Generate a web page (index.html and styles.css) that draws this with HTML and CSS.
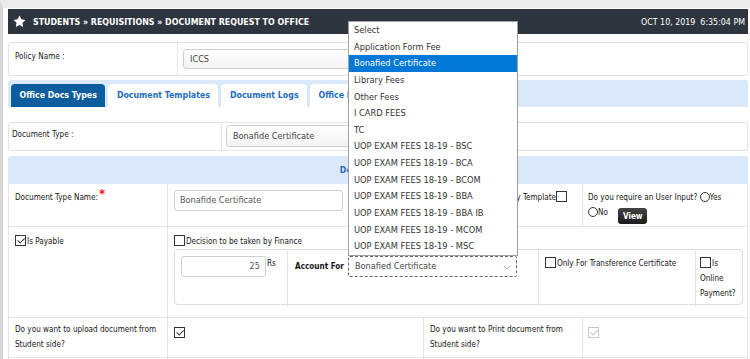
FILE: index.html
```html
<!DOCTYPE html>
<html lang="en">
<head>
    <meta charset="UTF-8">
    <title>Document Request To Office</title>
    <link rel="stylesheet" href="styles.css">
</head>
<body>
    <div class="page">
        <header class="topbar">
            <div class="crumb">
                <svg class="star" viewBox="0 0 24 24"><path fill="white" d="M12 1l3.4 7 7.6 1.1-5.5 5.3 1.3 7.6L12 18.4 5.2 22l1.3-7.6L1 9.1l7.6-1.1z"/></svg>
                <span>STUDENTS &raquo; REQUISITIONS &raquo; DOCUMENT REQUEST TO OFFICE</span>
            </div>
            <div class="clock">OCT 10, 2019&nbsp; 6:35:04 PM</div>
        </header>

        <div class="panel policy">
            <div class="panel-label">Policy Name :</div>
            <div class="panel-field"><div class="select policy-select">ICCS</div></div>
        </div>

        <ul class="tabs">
            <li class="tab active">Office Docs Types</li>
            <li class="tab">Document Templates</li>
            <li class="tab">Document Logs</li>
            <li class="tab">Office Docs Request</li>
        </ul>

        <div class="panel doctype">
            <div class="panel-label">Document Type :</div>
            <div class="panel-field"><div class="select doctype-select">Bonafide Certificate</div></div>
        </div>

        <div class="section-title">Document Type</div>

        <div class="form-grid">
            <!-- row 1 -->
            <div class="cell label">Document Type Name:<span class="req">*</span></div>
            <div class="cell field"><div class="input name-input">Bonafide Certificate</div></div>
            <div class="cell field copy">Do you want Copy Template<span class="cb"></span></div>
            <div class="cell field lines-4">
                Do you require an User Input? <span class="rd"></span>Yes<br>
                <span class="rd"></span>No <span class="view-btn">View</span>
            </div>

            <!-- row 2 -->
            <div class="cell label pay"><span class="cb checked"></span>Is Payable</div>
            <div class="cell field span3">
                <div class="finance"><span class="cb"></span>Decision to be taken by Finance</div>
                <div class="fee-box">
                    <div class="fee-cell amount">
                        <div class="input amount-input">25</div><span class="rs">Rs</span>
                    </div>
                    <div class="fee-cell account">
                        <b>Account For</b>
                        <div class="select focus">Bonafied Certificate<svg class="chev" viewBox="0 0 10 6"><path d="M1 1l4 4 4-4" stroke="#999" fill="none"/></svg></div>
                    </div>
                    <div class="fee-cell tc"><span class="cb"></span>Only For Transference Certificate</div>
                    <div class="fee-cell online"><span class="cb"></span>Is Online Payment?</div>
                </div>
            </div>

            <!-- row 3 -->
            <div class="cell label lines">Do you want to upload document from Student side?</div>
            <div class="cell field box-only"><span class="cb checked"></span></div>
            <div class="cell field lines">Do you want to Print document from Student side?</div>
            <div class="cell field box-only col4"><span class="cb checked disabled"></span></div>

            <!-- row 4 -->
            <div class="cell label"></div>
            <div class="cell field"></div>
            <div class="cell field"></div>
            <div class="cell field"></div>
        </div>
    </div>

    <ul class="dropdown">
        <li>Select</li>
        <li>Application Form Fee</li>
        <li class="hl">Bonafied Certificate</li>
        <li>Library Fees</li>
        <li>Other Fees</li>
        <li>I CARD FEES</li>
        <li>TC</li>
        <li>UOP EXAM FEES 18-19 - BSC</li>
        <li>UOP EXAM FEES 18-19 - BCA</li>
        <li>UOP EXAM FEES 18-19 - BCOM</li>
        <li>UOP EXAM FEES 18-19 - BBA</li>
        <li>UOP EXAM FEES 18-19 - BBA IB</li>
        <li>UOP EXAM FEES 18-19 - MCOM</li>
        <li>UOP EXAM FEES 18-19 - MSC</li>
    </ul>
</body>
</html>
```

FILE: styles.css
```css
* {
    margin: 0;
    padding: 0;
    box-sizing: border-box;
}

body {
    font-family: "DejaVu Sans Condensed", "DejaVu Sans", sans-serif;
    font-stretch: condensed;
    font-size: 8.1px;
    color: #161616;
    background-color: #fff;
    border-top: 8px solid #ebebeb;
    border-left: 3px solid #d8d8d8;
    min-height: 100vh;
    overflow: hidden;
}

.page {
    padding: 1px 2px 0 5px;
}

/* top bar */
.topbar {
    height: 25px;
    background-color: #2f353f;
    color: white;
    display: flex;
    justify-content: space-between;
    align-items: center;
    padding: 0 3px 0 5px;
}

.crumb {
    display: flex;
    align-items: center;
    font-weight: bold;
    font-size: 8.8px;
}

.star {
    width: 13px;
    height: 13px;
    margin-right: 7px;
}

.clock {
    font-size: 8.8px;
}

/* panels */
.panel {
    display: flex;
    border: 1px solid #e3e3e3;
    border-radius: 3px;
    background-color: white;
}

.policy {
    margin-top: 8px;
    height: 34px;
}

.policy .panel-label {
    width: 169px;
    padding: 8px 6px;
}

.policy .panel-field {
    padding: 6px 5px;
}

.panel-label {
    border-right: 1px solid #e6e6e6;
}

.select {
    height: 20px;
    border: 1px solid #cfcfcf;
    border-radius: 3px;
    background: linear-gradient(#ffffff, #f3f3f3);
    font-size: 9.1px;
    color: #444;
    padding: 0 0 0 6px;
    line-height: 18px;
    position: relative;
}

.policy-select {
    width: 300px;
}

.doctype {
    margin-top: 15px;
    height: 29px;
}

.doctype .panel-label {
    width: 213px;
    padding: 6px 3px;
}

.doctype .panel-field {
    padding: 2px 4px;
}

.doctype-select {
    width: 250px;
    height: 22px;
    line-height: 20px;
}

/* tabs */
.tabs {
    list-style: none;
    margin-top: 4px;
    height: 27px;
    background-color: #dbe8fa;
    border-radius: 3px 3px 0 0;
    padding: 4px 3px 0 3px;
    display: flex;
    align-items: flex-end;
    gap: 3px;
}

.tab {
    height: 23px;
    line-height: 23px;
    padding: 0 8.5px;
    background-color: white;
    border-radius: 4px 4px 0 0;
    font-weight: bold;
    font-size: 8.75px;
    color: #1d6cbd;
}

.tab.active {
    background-color: #0c5d9d;
    color: white;
}

.section-title {
    margin-top: 5px;
    height: 28px;
    line-height: 28px;
    background-color: #dbe8fa;
    border-radius: 3px 3px 0 0;
    text-align: center;
    font-weight: bold;
    font-size: 8.75px;
    color: #1d6cbd;
    padding-right: 8px;
}

/* form grid */
.form-grid {
    display: grid;
    grid-template-columns: 159px 256px 159px 165px;
    grid-template-rows: 43px 91px 40px 40px;
    border-left: 1px solid #e5e5e5;
}

.cell {
    border-right: 1px solid #e5e5e5;
    border-bottom: 1px solid #e5e5e5;
    line-height: 15px;
    padding: 6px 5px;
}

.cell.label {
    padding-left: 6px;
}

.cell.field {
    padding-left: 6px;
}

.cell.field.copy,
.cell.field.lines-4,
.cell.field.col4 {
    padding-left: 5px;
}

.req {
    color: #e41010;
    font-weight: bold;
    font-size: 13px;
    line-height: 0;
    position: relative;
    top: -2px;
    margin-left: 1px;
}

.input {
    border: 1px solid #cfcfcf;
    border-radius: 3px;
    background-color: white;
    font-size: 9.1px;
    color: #555;
    padding: 0 5px;
}

.name-input {
    width: 169px;
    height: 21px;
    line-height: 19px;
}

.copy {
    text-align: right;
    padding-right: 14px;
}

.cb {
    display: inline-block;
    width: 11px;
    height: 11px;
    border: 1px solid #333;
    background-color: white;
    vertical-align: -2px;
    margin-right: 1px;
    position: relative;
}

.cb.checked::after {
    content: "";
    position: absolute;
    left: 1px;
    top: 1px;
    width: 6px;
    height: 3px;
    border-left: 1px solid #333;
    border-bottom: 1px solid #333;
    transform: rotate(-45deg) translate(0, 1px);
}

.cb.disabled {
    border-color: #c8c8c8;
}

.cb.disabled::after {
    border-color: #c0c0c0;
}

.rd {
    display: inline-block;
    width: 10px;
    height: 10px;
    border: 1px solid #333;
    border-radius: 50%;
    vertical-align: -2px;
}

.view-btn {
    display: inline-block;
    margin-left: 8px;
    width: 29px;
    height: 16px;
    line-height: 16px;
    text-align: center;
    border-radius: 3px;
    background: linear-gradient(#444, #1c1c1c);
    color: white;
    font-weight: bold;
    vertical-align: -4px;
}

.pay {
    padding-top: 7px;
}

.span3 {
    grid-column: span 3;
    padding-top: 7px;
    padding-right: 4px;
}

.fee-box {
    display: grid;
    grid-template-columns: 113px 251px 157px 47px;
    height: 56px;
    border: 1px solid #dedede;
    border-radius: 4px;
}

.fee-cell {
    border-right: 1px solid #e3e3e3;
}

.fee-cell:last-child {
    border-right: none;
}

.amount {
    display: flex;
    align-items: flex-start;
    padding: 6px 6px;
}

.amount-input {
    width: 85px;
    height: 21px;
    line-height: 19px;
    text-align: right;
}

.rs {
    margin-left: 1px;
    line-height: 15px;
}

.account {
    display: flex;
    align-items: flex-start;
    padding: 6px 0 0 7px;
    gap: 4px;
}

.account b {
    line-height: 20px;
}

.select.focus {
    width: 169px;
    height: 21px;
    line-height: 19px;
    border: 1px dashed #666;
    border-radius: 2px;
    background: white;
}

.chev {
    position: absolute;
    right: 5px;
    top: 8px;
    width: 8px;
    height: 5px;
}

.tc {
    padding: 6px 6px;
}

.online {
    padding: 6px 4px;
    line-height: 15px;
}

.lines {
    padding-top: 4px;
}

.box-only {
    padding-top: 8px;
}

/* open select list */
.dropdown {
    position: absolute;
    left: 348px;
    top: 21px;
    width: 170px;
    list-style: none;
    background-color: white;
    border: 1px solid #a0a0a0;
    font-size: 9.2px;
    color: #333;
    z-index: 10;
}

.dropdown li {
    height: 16.64px;
    line-height: 16.64px;
    padding-left: 5px;
    white-space: nowrap;
}

.dropdown li.hl {
    background-color: #0078d7;
    color: white;
}
```
